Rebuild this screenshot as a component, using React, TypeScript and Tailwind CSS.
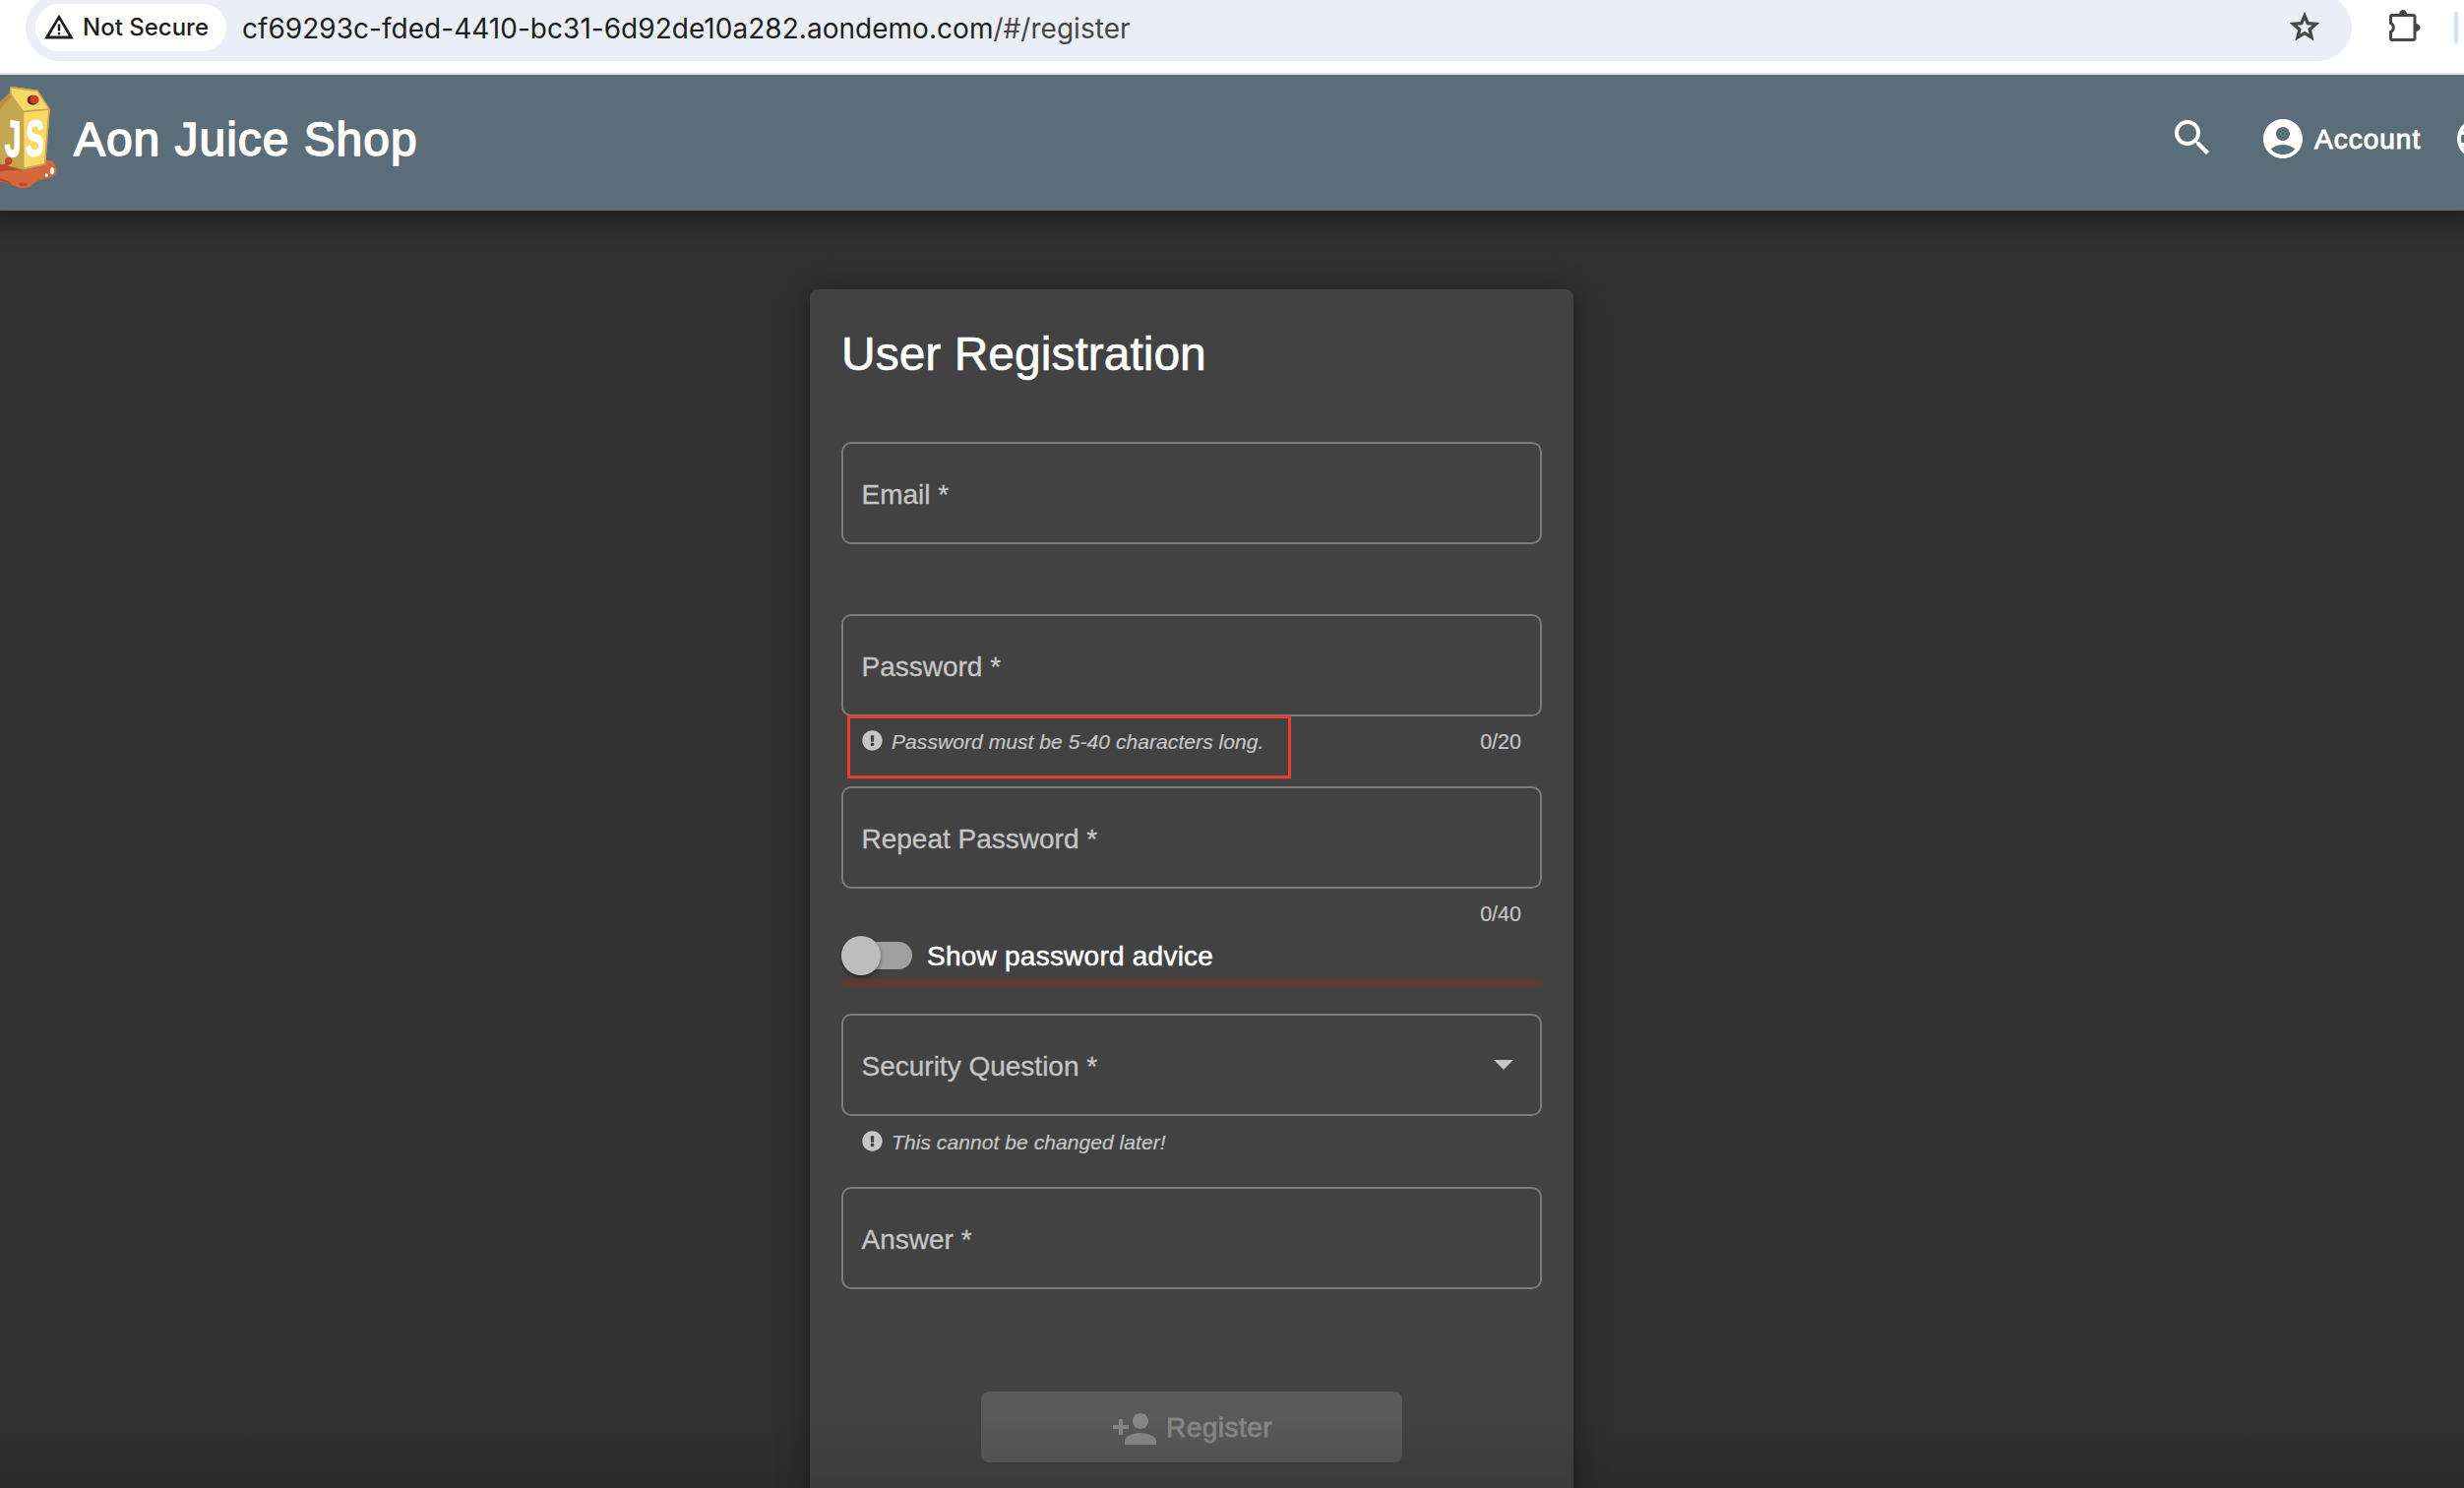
import type { ReactNode } from "react";
import { MdAccountCircle, MdLanguage, MdPersonAdd, MdSearch } from "react-icons/md";
import { FaExclamationCircle } from "react-icons/fa";

function WarningIcon() {
  return (
    <svg className="h-[28px] w-[32px] shrink-0" viewBox="0 0 32 28" fill="none">
      <path d="M3.600 24 16 3.400 28.400 24Z" stroke="#1f1f1f" strokeWidth="2.8" />
      <path d="M16 10.500v7M16 19v2.600" stroke="#1f1f1f" strokeWidth="2.4" />
    </svg>
  );
}

function StarIcon() {
  return (
    <svg className="mb-[2px] h-[32px] w-[34px] shrink-0" viewBox="0 0 34 32" fill="none">
      <path
        d="M17 5 20.200 12.700 28.500 13.400 22.200 18.900 24.100 27 17 22.700 9.900 27 11.800 18.900 5.500 13.400 13.800 12.700Z"
        stroke="#474747"
        strokeWidth="3.3"
      />
    </svg>
  );
}

function PuzzleIcon() {
  return (
    <svg className="h-[36px] w-[36px] shrink-0" viewBox="0 0 36 36" fill="none">
      <path
        d="M5 7.500H26.500a1.500 1.500 0 0 1 1.500 1.500V31a1.500 1.500 0 0 1-1.500 1.500H5A1.500 1.500 0 0 1 3.500 31V24.500a5 5 0 0 0 0-9V9A1.500 1.500 0 0 1 5 7.500Z"
        stroke="#474747"
        strokeWidth="3"
      />
      <path d="M12 6.500a4 4.500 0 0 1 8 0ZM29 16a4.500 4 0 0 1 0 8Z" fill="#474747" />
    </svg>
  );
}

function JuiceLogo() {
  return (
    <svg className="mb-[12px] h-[110px] w-[60px] shrink-0" viewBox="0 42 180 330">
      <path
        d="M0 304C30 310 50 300 72 300L138 278C160 276 174 292 172 312C170 332 148 334 132 336C112 340 100 352 92 359C76 366 54 364 42 356C28 346 14 346 0 344Z"
        fill="#d2683c"
      />
      <path d="M0 296C20 292 40 304 66 306C40 314 18 306 0 312Z" fill="#c4432b" />
      <path d="M0 334C14 338 26 342 36 350C22 348 12 344 0 343Z" fill="#c4432b" />
      <ellipse cx="70" cy="352" rx="13" ry="5" fill="#c4432b" />
      <path d="M0 108 33 84 70 130 70 307 0 290Z" fill="#c5a64f" />
      <path d="M0 100 30 72 34 86 0 122Z" fill="#b98f3f" />
      <path d="M32 54 114 65 152 122 70 130 34 84Z" fill="#f9d966" />
      <path d="M70 130 152 122 138 291 70 307Z" fill="#f9d966" />
      <path
        d="M32 56 114 67 150 122 137 290 71 305 70 130 152 123M70 130 32 78V56"
        fill="none"
        stroke="#c5a64f"
        strokeWidth="5"
      />
      <ellipse cx="100" cy="95" rx="17" ry="15" fill="#6e2018" />
      <ellipse cx="105" cy="93" rx="14" ry="13" fill="#c4432b" />
      <g fill="#fff" stroke="#fff" strokeWidth="3" fontFamily="Liberation Sans" fontWeight="700" fontSize="100">
        <text transform="matrix(0.9 0.16 0 1.56 14 262)">J</text>
        <text transform="matrix(0.84 -0.1 -0.02 1.54 78 268)">S</text>
      </g>
      <circle cx="26" cy="281" r="11" fill="#c4432b" />
      <path d="M20 286 32 288 12 306 0 300Z" fill="#c4432b" />
      <ellipse cx="159" cy="311" rx="6" ry="11" fill="#fff" />
      <circle cx="142" cy="324" r="5" fill="#fff" />
    </svg>
  );
}

function BrowserBar() {
  return (
    <div className="relative z-10 flex h-[76px] shrink-0 items-start border-b-2 border-[#dfe3e0] bg-white pl-[26px]">
      <div className="-mt-[6px] flex h-[68px] w-[2364px] shrink-0 items-center rounded-full bg-[#ebeef6] pr-[31px] pl-[10px]">
        <div className="flex h-[48px] w-[194px] shrink-0 items-center rounded-full bg-white pl-[8px]">
          <WarningIcon />
          <span className="ml-[8px] font-[Inter] text-[24px] leading-none font-medium whitespace-nowrap text-[#1f1f1f]">
            Not Secure
          </span>
        </div>
        <span className="ml-[16px] grow pt-[2px] font-[Inter] text-[28px] leading-none tracking-[0.03px] whitespace-nowrap text-[#1f1f1f]">
          cf69293c-fded-4410-bc31-6d92de10a282.aondemo.com
          <span className="text-[#474747]">/#/register</span>
        </span>
        <StarIcon />
      </div>
      <div className="mt-[8px] ml-[36px]">
        <PuzzleIcon />
      </div>
      <div className="mt-[12px] ml-[32px] h-[32px] w-[4px] shrink-0 rounded-full bg-[#d3e3fd]" />
    </div>
  );
}

function Header() {
  return (
    <header className="relative flex h-[138px] shrink-0 items-center bg-[#5b6d78] text-white shadow-[0_0_16px_8px_rgba(0,0,0,0.2),0_0_24px_20px_rgba(0,0,0,0.12)]">
      <JuiceLogo />
      <h1 className="mb-[6px] ml-[15px] grow text-[48px] leading-none tracking-[0.95px] [-webkit-text-stroke:1.500px_white]">
        Aon Juice Shop
      </h1>
      <MdSearch className="mr-[44px] mb-[10px] size-[48px] shrink-0" />
      <MdAccountCircle className="mr-[8px] mb-[8px] size-[48px] shrink-0" />
      <span className="mb-[7px] w-[141px] shrink-0 text-[28px] leading-none tracking-[1px] [-webkit-text-stroke:1px_white]">
        Account
      </span>
      <div className="mb-[8px] w-[11px] shrink-0 overflow-hidden">
        <MdLanguage className="size-[48px]" />
      </div>
    </header>
  );
}

function Field({ label, children }: { label: string; children?: ReactNode }) {
  return (
    <div className="flex h-[104px] items-center justify-between rounded-[10px] border-2 border-[#7b7b7b] pr-[27px] pl-[18.5px]">
      <span className="pt-[4px] text-[28px] leading-none text-[#c6c6c6] [-webkit-text-stroke:0.3px_#c6c6c6]">
        {label}
      </span>
      {children}
    </div>
  );
}

function Hint({ children }: { children: ReactNode }) {
  return (
    <span className="flex items-center gap-[9px] text-[21px] leading-none tracking-[0.07px] text-[#c6c6c6] italic [-webkit-text-stroke:0.2px_#c6c6c6]">
      <FaExclamationCircle className="size-[21px]" />
      <span className="-mb-[2px]">{children}</span>
    </span>
  );
}

function Counter({ value }: { value: string }) {
  return (
    <span className="pt-px text-[21.5px] leading-[22px] text-[#c6c6c6] [-webkit-text-stroke:0.2px_#c6c6c6]">
      {value}
    </span>
  );
}

export default function App() {
  return (
    <div className="relative flex h-[1512px] w-[2504px] flex-col overflow-hidden bg-[#303030] font-['Liberation_Sans',Arial,sans-serif]">
      <BrowserBar />
      <Header />
      <main className="flex min-h-0 grow pt-[80px] pl-[823px]">
        <section className="h-[1300px] w-[776px] shrink-0 rounded-[8px] bg-[#424242] px-[32px] shadow-[0_6px_10px_-2px_rgba(0,0,0,0.2),0_12px_20px_rgba(0,0,0,0.14),0_2px_36px_rgba(0,0,0,0.2)]">
          <h2 className="pt-[42px] text-[48px] leading-[48px] text-white [-webkit-text-stroke:0.6px_white]">
            User Registration
          </h2>

          <form className="mt-[65px]">
            <Field label="Email *" />
            <div className="h-[71px]" />

            <Field label="Password *" />
            <div className="relative flex h-[71px] items-start justify-between px-[21px] pt-[14px]">
              <Hint>Password must be 5-40 characters long.</Hint>
              <Counter value="0/20" />
              <div className="absolute -top-px left-[6px] h-[64px] w-[451px] border-3 border-[#ee3e27]" />
            </div>

            <Field label="Repeat Password *" />
            <div className="flex h-[48px] items-start justify-end px-[21px] pt-[14px]">
              <Counter value="0/40" />
            </div>

            <div className="flex h-[40px] items-center">
              <div className="flex h-[28px] w-[72px] items-center rounded-full bg-[#9f9f9f]">
                <div className="size-[40px] shrink-0 rounded-full bg-[#bdbdbd] shadow-[0_2px_4px_rgba(0,0,0,0.4)]" />
              </div>
              <span className="ml-[15px] pt-[2px] text-[28px] leading-none tracking-[0.24px] text-white [-webkit-text-stroke:0.5px_white]">
                Show password advice
              </span>
            </div>
            <div className="mt-[4px] mb-[27px] h-[8px] bg-[#5f3a2f]" />

            <Field label="Security Question *">
              <svg className="h-[10px] w-[20px]" viewBox="0 0 20 10">
                <path d="M0 0H20L10 10Z" fill="#c6c6c6" />
              </svg>
            </Field>
            <div className="flex h-[71.5px] items-start px-[21px] pt-[15px]">
              <Hint>This cannot be changed later!</Hint>
            </div>

            <Field label="Answer *" />

            <div className="mx-auto mt-[104.5px] flex h-[72px] w-[428px] items-center justify-center rounded-[8px] bg-[#595959] text-[#878787]">
              <MdPersonAdd className="mt-[4px] mr-[8px] size-[48px]" />
              <span className="pt-[2px] text-[28px] leading-none tracking-[0.45px] [-webkit-text-stroke:0.8px_#878787]">
                Register
              </span>
            </div>
          </form>
        </section>
      </main>
      <div className="pointer-events-none absolute inset-x-0 bottom-0 h-[72px] bg-linear-to-b from-transparent to-black/12" />
    </div>
  );
}
